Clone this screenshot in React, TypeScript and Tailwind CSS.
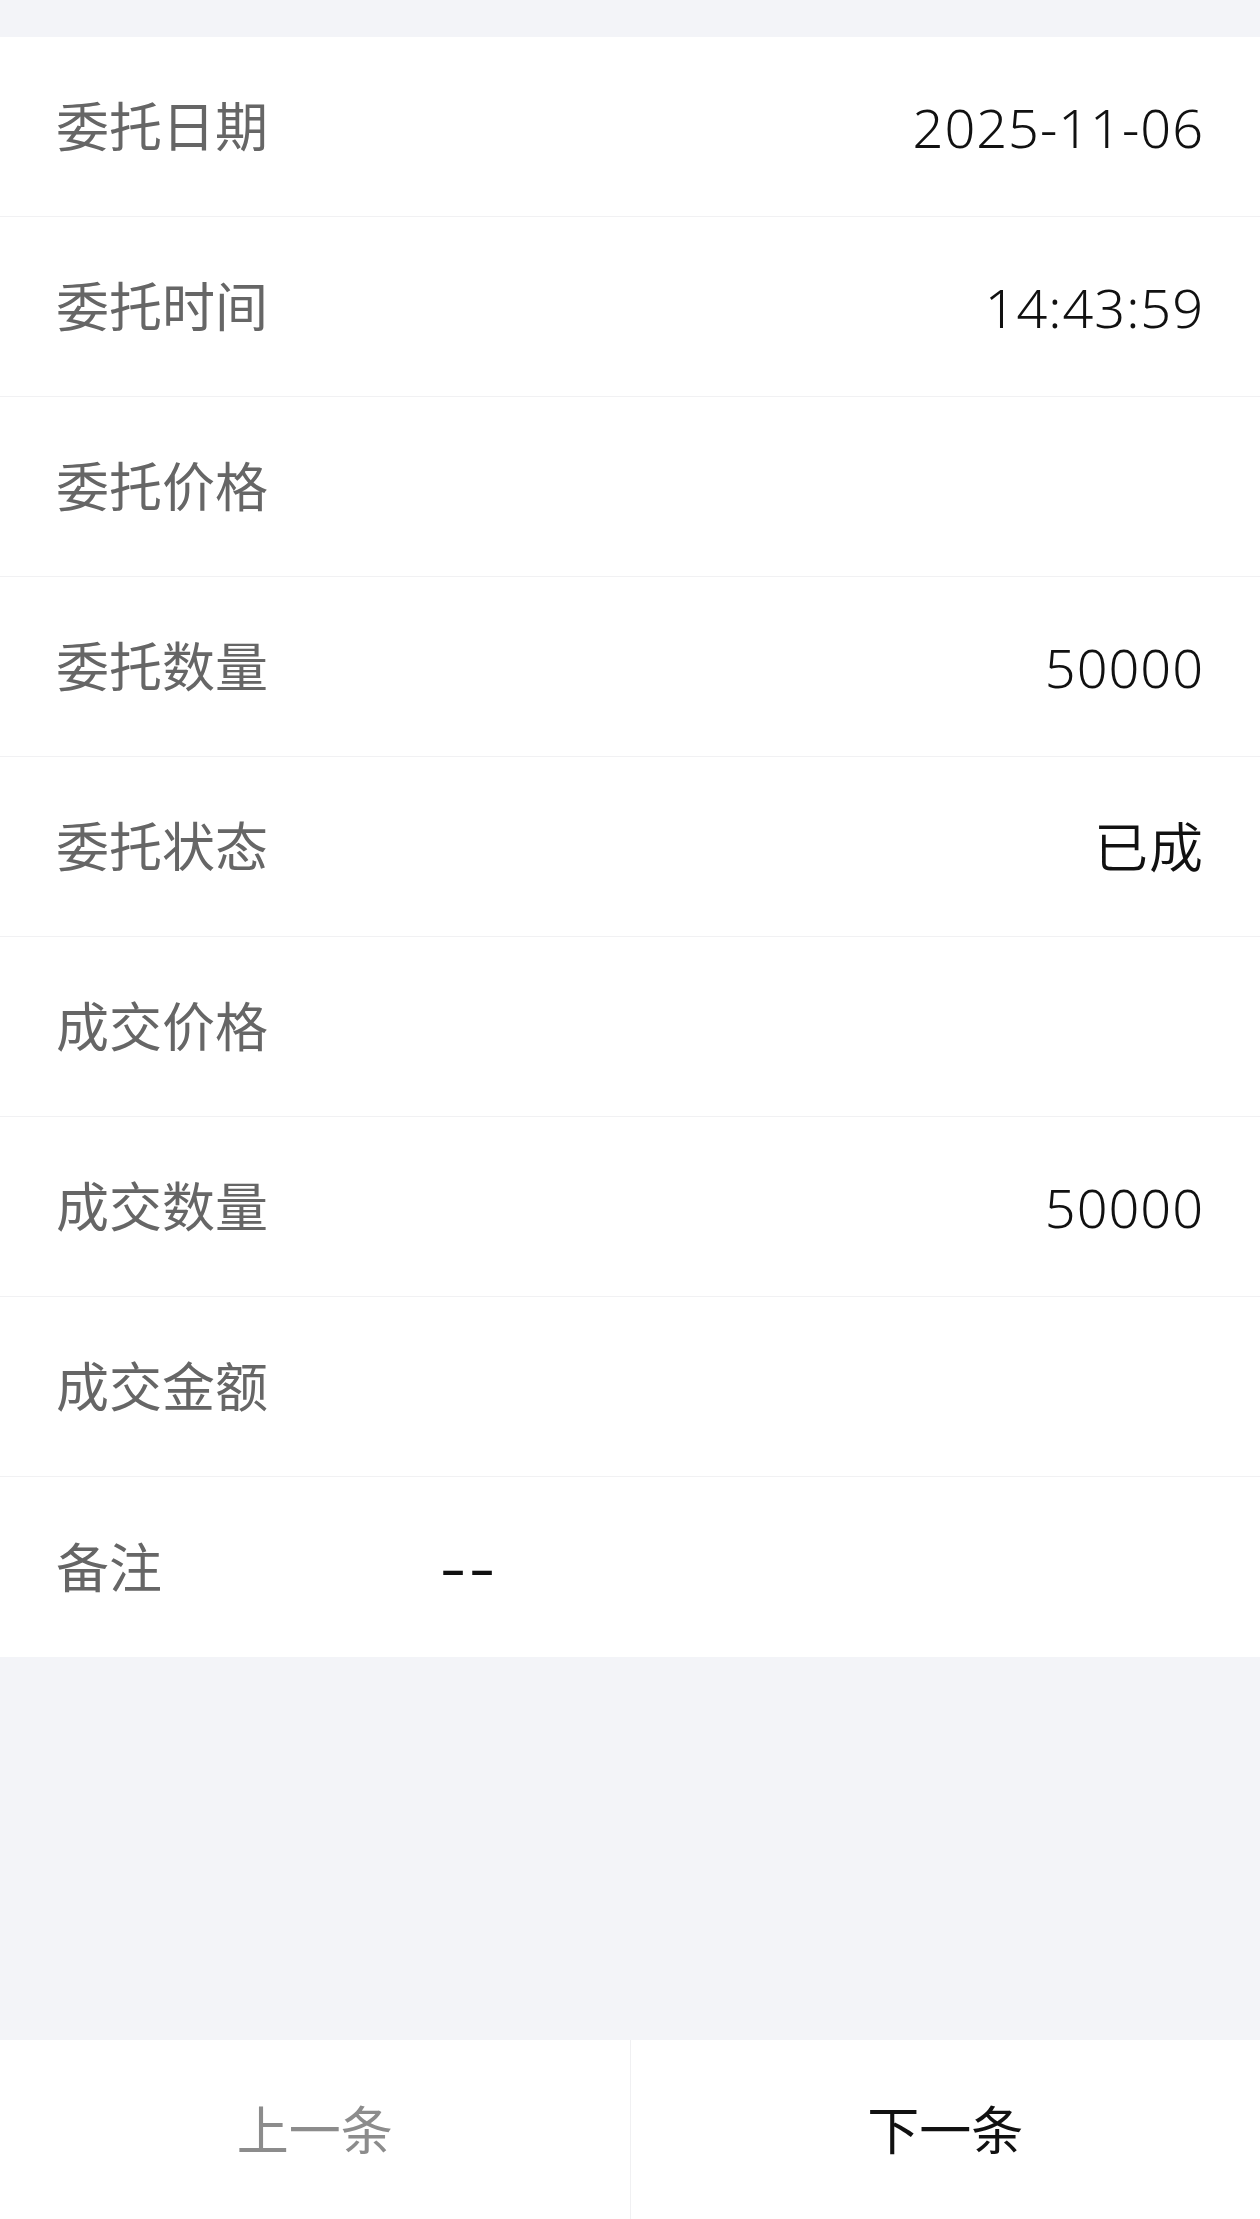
import React from 'react';

const rows: { label: string; value: string }[] = [
  { label: '委托日期', value: '2025-11-06' },
  { label: '委托时间', value: '14:43:59' },
  { label: '委托价格', value: '' },
  { label: '委托数量', value: '50000' },
  { label: '委托状态', value: '已成' },
  { label: '成交价格', value: '' },
  { label: '成交数量', value: '50000' },
  { label: '成交金额', value: '' },
];

const font = { fontFamily: '"Noto Sans", "Noto Sans CJK SC", sans-serif' };

export default function App() {
  return (
    <div className="w-[1260px] h-[2219px] flex flex-col bg-[#f3f4f8]" style={font}>
      <div className="h-[37px] shrink-0" />

      <div className="bg-white flex flex-col">
        {rows.map((r) => (
          <div
            key={r.label}
            className="h-[180px] flex items-center justify-between px-[56px] border-b border-[#f1f1f3]"
          >
            <span className="text-[53px] text-[#666666] leading-none">{r.label}</span>
            <span className="text-[54px] font-[350] text-[#111111] leading-none tracking-[1px]">{r.value}</span>
          </div>
        ))}
        <div className="h-[180px] flex items-center px-[56px]">
          <span className="w-[384px] text-[53px] text-[#666666] leading-none">备注</span>
          <span className="text-[54px] text-[#111111] leading-none tracking-[2px] scale-x-[1.5] origin-left">--</span>
        </div>
      </div>

      <div className="flex-1" />

      <div className="h-[179px] shrink-0 bg-white flex">
        <button className="flex-1 flex items-center justify-center text-[52px] text-[#8c8c8c] border-r border-[#f0f0f2]">
          上一条
        </button>
        <button className="flex-1 flex items-center justify-center text-[52px] text-[#111111]">
          下一条
        </button>
      </div>
    </div>
  );
}
